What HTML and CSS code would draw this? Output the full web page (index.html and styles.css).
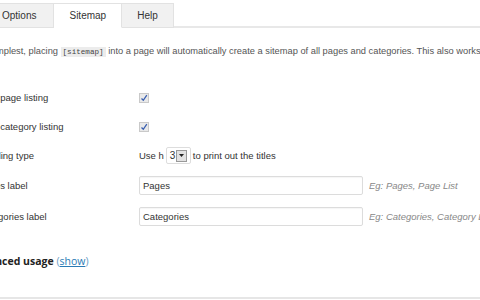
FILE: index.html
```html
<!DOCTYPE html>
<html lang="en">
<head>
    <meta charset="UTF-8">
    <title>Sitemap settings</title>
    <link rel="stylesheet" href="styles.css">
</head>
<body>
    <div class="tabs">
        <a class="tab first">Options</a>
        <a class="tab active">Sitemap</a>
        <a class="tab">Help</a>
        <span class="tab-rest"></span>
    </div>

    <p class="intro">At its simplest, placing <code>[sitemap]</code> into a page will automatically create a sitemap of all pages and categories. This also works with posts.</p>

    <div class="form">
        <div class="row">
            <label>Hide page listing</label>
            <div><span class="check"><svg width="8" height="8" viewBox="0 0 8 8"><path d="M1.5 4.5 L3.3 6.3 L6.8 1.2" fill="none" stroke="#3a5fb0" stroke-width="1.3"/></svg></span></div>
        </div>
        <div class="row">
            <label>Hide category listing</label>
            <div><span class="check"><svg width="8" height="8" viewBox="0 0 8 8"><path d="M1.5 4.5 L3.3 6.3 L6.8 1.2" fill="none" stroke="#3a5fb0" stroke-width="1.3"/></svg></span></div>
        </div>
        <div class="row">
            <label>Heading type</label>
            <div class="inline">
                Use h
                <span class="select">3<span class="select-btn"><svg width="5" height="3" viewBox="0 0 5 3"><path d="M0 0 H5 L2.5 3 Z" fill="#222"/></svg></span></span>
                to print out the titles
            </div>
        </div>
        <div class="row tall">
            <label>Pages label</label>
            <div class="inline"><span class="input">Pages</span><em class="hint">Eg: Pages, Page List</em></div>
        </div>
        <div class="row tall">
            <label>Categories label</label>
            <div class="inline"><span class="input">Categories</span><em class="hint">Eg: Categories, Category List</em></div>
        </div>
    </div>

    <h3 class="advanced">Advanced usage <span class="paren">(<a>show</a>)</span></h3>

    <div class="foot"></div>
</body>
</html>
```

FILE: styles.css
```css
* {
    margin: 0;
    padding: 0;
    box-sizing: border-box;
}

body {
    font-family: "Liberation Sans", Arial, sans-serif;
    background: #fff;
    color: #333;
    width: 480px;
    height: 300px;
    overflow: hidden;
}

/* tabs */
.tabs {
    display: flex;
    padding-top: 3px;
    white-space: nowrap;
}

.tab {
    height: 25px;
    line-height: 23px;
    padding: 0 15px;
    font-size: 10px;
    color: #333;
    background: #f1f1f1;
    border: 1px solid #e2e2e2;
    border-left: none;
}

.tab.first {
    margin-left: -30px;
    padding-left: 32px;
    padding-right: 17px;
}

.tab.active {
    background: #fff;
    border-bottom-color: #fff;
}

.tab-rest {
    flex: 1;
    border-bottom: 2px solid #e8e8e8;
}

/* intro */
.intro {
    margin-top: 16px;
    margin-left: -34px;
    width: 580px;
    font-size: 9.3px;
    line-height: 14px;
    color: #555;
    white-space: nowrap;
}

.intro code {
    font-family: "Liberation Mono", monospace;
    font-size: 7.6px;
    background: #ececec;
    color: #444;
    padding: 1px 2px;
}

/* form */
.form {
    margin-top: 24px;
    margin-left: -22px;
}

.row {
    display: grid;
    grid-template-columns: 161px 1fr;
    align-items: center;
    height: 29px;
    font-size: 9.5px;
    color: #333;
}

.row.tall {
    height: 31px;
}

.check {
    display: flex;
    align-items: center;
    justify-content: center;
    width: 10px;
    height: 10px;
    background: #e9e9e9;
    border: 1px solid #c9c9c9;
    margin-top: 1px;
}

.inline {
    display: flex;
    align-items: center;
    gap: 2px;
    white-space: nowrap;
}

.select {
    display: inline-flex;
    align-items: center;
    height: 17px;
    width: 25px;
    padding-left: 3px;
    border: 1px solid #ddd;
    border-radius: 2px;
    font-size: 10px;
    color: #333;
    gap: 1px;
}

.select-btn {
    display: flex;
    align-items: center;
    justify-content: center;
    width: 11px;
    height: 12px;
    background: #e2e2e2;
    border: 1px solid #999;
}

.input {
    display: block;
    width: 224px;
    height: 19px;
    line-height: 17px;
    padding-left: 3px;
    border: 1px solid #dcdcdc;
    border-radius: 2px;
    box-shadow: inset 0 1px 1px rgba(0, 0, 0, 0.04);
    font-size: 9.5px;
    color: #333;
}

.hint {
    margin-left: 4px;
    font-size: 9.5px;
    color: #888;
}

/* advanced */
.advanced {
    margin-top: 22px;
    margin-left: -31px;
    font-family: "Open Sans", sans-serif;
    font-size: 10.5px;
    line-height: 14px;
    font-weight: 700;
    color: #222;
}

.paren {
    font-weight: 400;
    color: #6a9bc3;
}

.paren a {
    color: #2a7bb5;
    text-decoration: underline;
}

.foot {
    margin-top: 29px;
    border-top: 2px solid #e6e6e6;
}
```
